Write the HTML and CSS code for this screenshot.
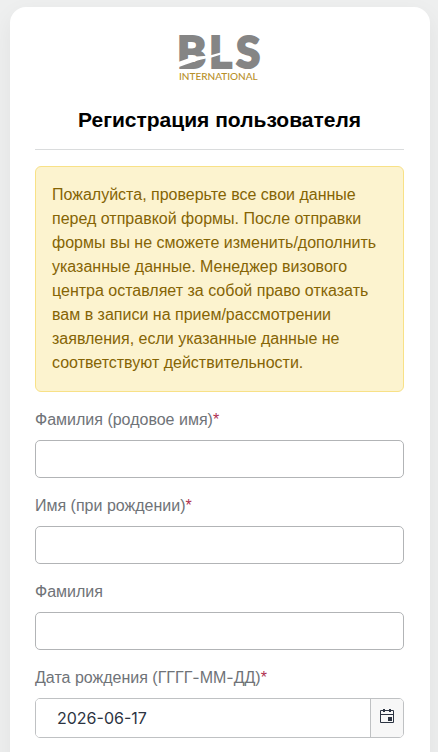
FILE: index.html
```html
<!DOCTYPE html>
<html lang="ru">
<head>
    <meta charset="UTF-8">
    <meta name="viewport" content="width=device-width, initial-scale=1.0">
    <title>Регистрация пользователя</title>
    <link rel="stylesheet" href="styles.css">
</head>
<body>
    <main class="card">
        <!-- Logo -->
        <svg class="logo" viewBox="0 0 87 48" role="img" aria-label="BLS International">
            <g class="logo-letters">
                <text x="1" y="34">B</text>
                <text x="33" y="34">L</text>
                <text x="60" y="34">S</text>
            </g>
            <path class="logo-swoosh" d="M0 29 C10 25 18 22 28 22 L32 22 L50 17 L50 19 L34 24 C24 25 14 29 0 34 Z"/>
            <text class="logo-name" x="3" y="46">INTERNATIONAL</text>
        </svg>

        <h1 class="title">Регистрация пользователя</h1>

        <div class="alert">
            Пожалуйста, проверьте все свои данные перед отправкой формы. После отправки формы вы не сможете изменить/дополнить указанные данные. Менеджер визового центра оставляет за собой право отказать вам в записи на прием/рассмотрении заявления, если указанные данные не соответствуют действительности.
        </div>

        <form>
            <div class="field">
                <label for="surname-birth">Фамилия (родовое имя)<span class="required">*</span></label>
                <input type="text" class="form-control" id="surname-birth" required>
            </div>
            <div class="field">
                <label for="first-name">Имя (при рождении)<span class="required">*</span></label>
                <input type="text" class="form-control" id="first-name" required>
            </div>
            <div class="field">
                <label for="last-name">Фамилия</label>
                <input type="text" class="form-control" id="last-name">
            </div>
            <div class="field">
                <label for="birth-date">Дата рождения (ГГГГ<span class="dash">-</span>ММ<span class="dash">-</span>ДД)<span class="required">*</span></label>
                <div class="datepicker">
                    <input type="text" class="date-input" id="birth-date" value="2026-06-17" required>
                    <button type="button" class="date-btn" aria-label="Календарь">
                        <svg class="calendar-icon" viewBox="0 0 16 16">
                            <path d="M1.5 2.5h13v12h-13zM1.5 6.5h13" fill="none" stroke="currentColor"/>
                            <path d="M4 1h2v3H4zM10 1h2v3h-2zM9 9h4v4H9z" fill="currentColor"/>
                        </svg>
                    </button>
                </div>
            </div>
        </form>
    </main>
</body>
</html>
```

FILE: styles.css
```css
* {
    box-sizing: border-box;
}

body {
    margin: 0;
    padding: 7px 8px 0 10px;
    background-color: #eeefef;
    font-family: "Liberation Sans", Arial, sans-serif;
    font-size: 16px;
    line-height: 24px;
    color: #212529;
}

.card {
    min-height: 100vh;
    padding: 27px 26px 24px 25px;
    background-color: #fff;
    border-radius: 16px;
    box-shadow: 0 8px 24px rgba(0, 20, 10, 0.06);
}

.logo {
    display: block;
    width: 87px;
    height: 48px;
    margin: 0 auto 24px;
    overflow: visible;
}

.logo-letters {
    font-family: Lato, sans-serif;
    font-size: 44px;
    font-weight: 900;
    fill: #858585;
    stroke: #858585;
    stroke-width: 2px;
}

.logo-swoosh {
    fill: #fff;
}

.logo-name {
    font-family: Lato, sans-serif;
    font-size: 10px;
    font-weight: 500;
    fill: #b8902a;
}

.title {
    margin: 0 0 16px;
    padding-bottom: 15px;
    border-bottom: 1px solid #dadcdd;
    font-size: 21px;
    line-height: 28px;
    font-weight: bold;
    text-align: center;
    color: #000;
}

.alert {
    margin-bottom: 16px;
    padding: 16px;
    background-color: #fcf3cf;
    border: 1px solid #f8e187;
    border-radius: 6px;
    color: #856404;
}

.field {
    margin-bottom: 16px;
}

.field label {
    display: block;
    margin-bottom: 8px;
    color: #6f7378;
}

.dash {
    font-family: Inter, sans-serif;
    line-height: 16px;
}

.required {
    color: #b03050;
    line-height: 16px;
}

.form-control {
    display: block;
    width: 100%;
    height: 38px;
    padding: 6px 12px;
    background-color: #fff;
    border: 1px solid #b2b4b6;
    border-radius: 5px;
    font: inherit;
}

.datepicker {
    display: flex;
    height: 40px;
    border: 1px solid #bfc1c3;
    border-radius: 5px;
    overflow: hidden;
}

.date-input {
    flex: 1;
    min-width: 0;
    padding: 0 21px;
    border: none;
    background-color: #fff;
    font-family: Inter, sans-serif;
    font-size: 16px;
    color: #2c3442;
}

.date-btn {
    display: flex;
    align-items: center;
    justify-content: center;
    width: 33px;
    padding: 0 0 4px;
    border: none;
    border-left: 1px solid #bfc1c3;
    background-color: #f7f7f7;
    color: #2c3442;
    cursor: pointer;
}

.calendar-icon {
    width: 16px;
    height: 16px;
}

.form-control:focus,
.datepicker:focus-within {
    border-color: #856404;
}
```
